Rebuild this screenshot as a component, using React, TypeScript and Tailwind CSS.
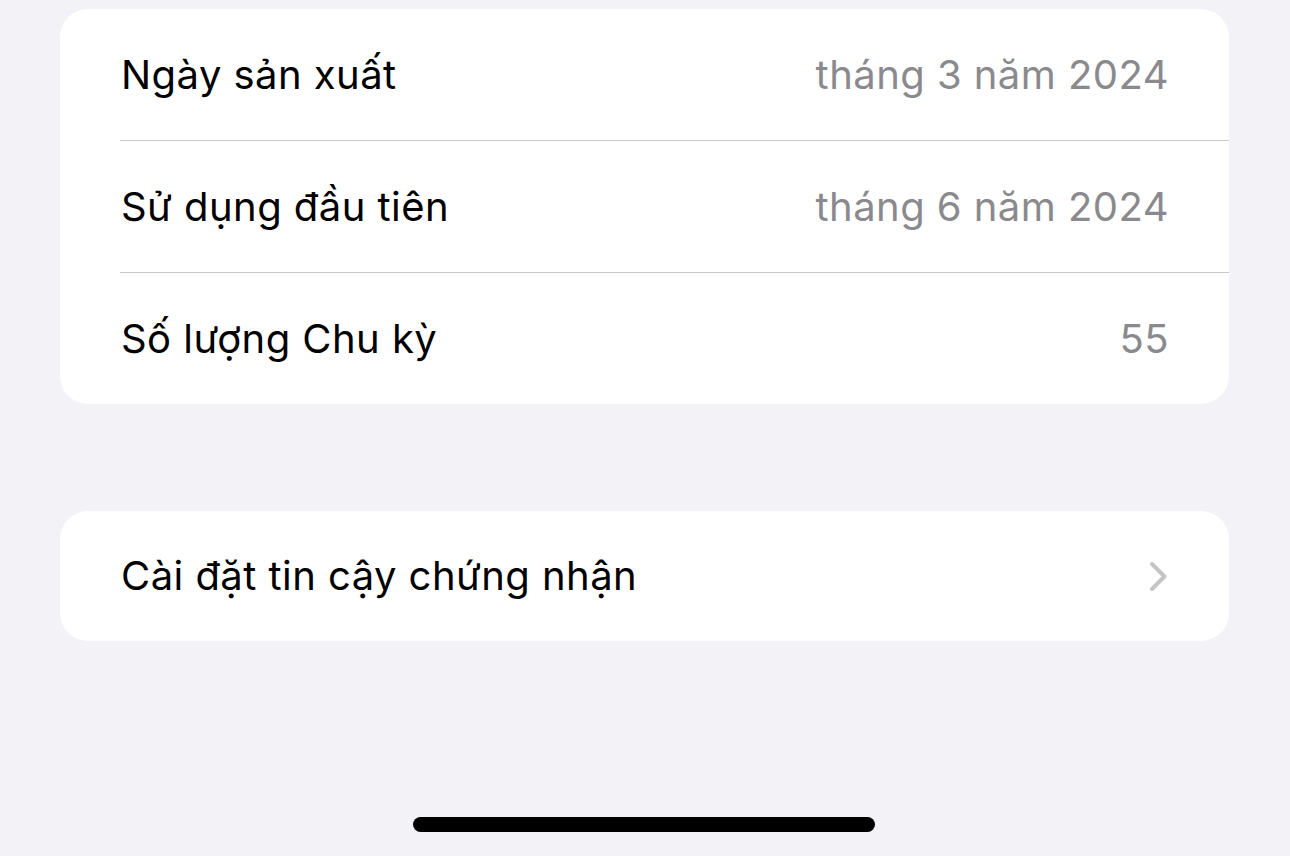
import React from "react";

const font = { fontFamily: "Inter, 'Noto Sans', sans-serif" };

function Row({ label, value, divider }: { label: string; value?: string; divider?: boolean }) {
  return (
    <div className="flex flex-col">
      <div className="flex h-[131px] items-center justify-between pl-[61px] pr-[60px]">
        <span className="text-[40px] text-black tracking-[0.45px]">{label}</span>
        {value && <span className="text-[40px] text-[#8a8a8e] tracking-[0.45px]">{value}</span>}
      </div>
      {divider && <div className="ml-[60px] h-px bg-[#c8c8cc]" />}
    </div>
  );
}

function Chevron() {
  return (
    <svg width="19" height="31" viewBox="0 0 19 31" fill="none">
      <path d="M3 3 L15.5 15.5 L3 28" stroke="#c4c4c7" strokeWidth="4" strokeLinecap="round" strokeLinejoin="round" />
    </svg>
  );
}

export default function App() {
  return (
    <div className="flex h-[856px] w-[1290px] flex-col bg-[#f2f2f7] pl-[60px] pr-[61px] pt-[9px]" style={font}>
      <div className="overflow-hidden rounded-[28px] bg-white">
        <Row label="Ngày sản xuất" value="tháng 3 năm 2024" divider />
        <Row label="Sử dụng đầu tiên" value="tháng 6 năm 2024" divider />
        <Row label="Số lượng Chu kỳ" value="55" />
      </div>

      <div className="mt-[107px] flex h-[130px] items-center justify-between rounded-[28px] bg-white pl-[61px] pr-[61px]">
        <span className="text-[40px] text-black tracking-[0.45px]">Cài đặt tin cậy chứng nhận</span>
        <Chevron />
      </div>

      <div className="mt-auto mb-[24px] flex justify-center pr-[1px]">
        <div className="h-[15px] w-[462px] rounded-full bg-black" />
      </div>
    </div>
  );
}
